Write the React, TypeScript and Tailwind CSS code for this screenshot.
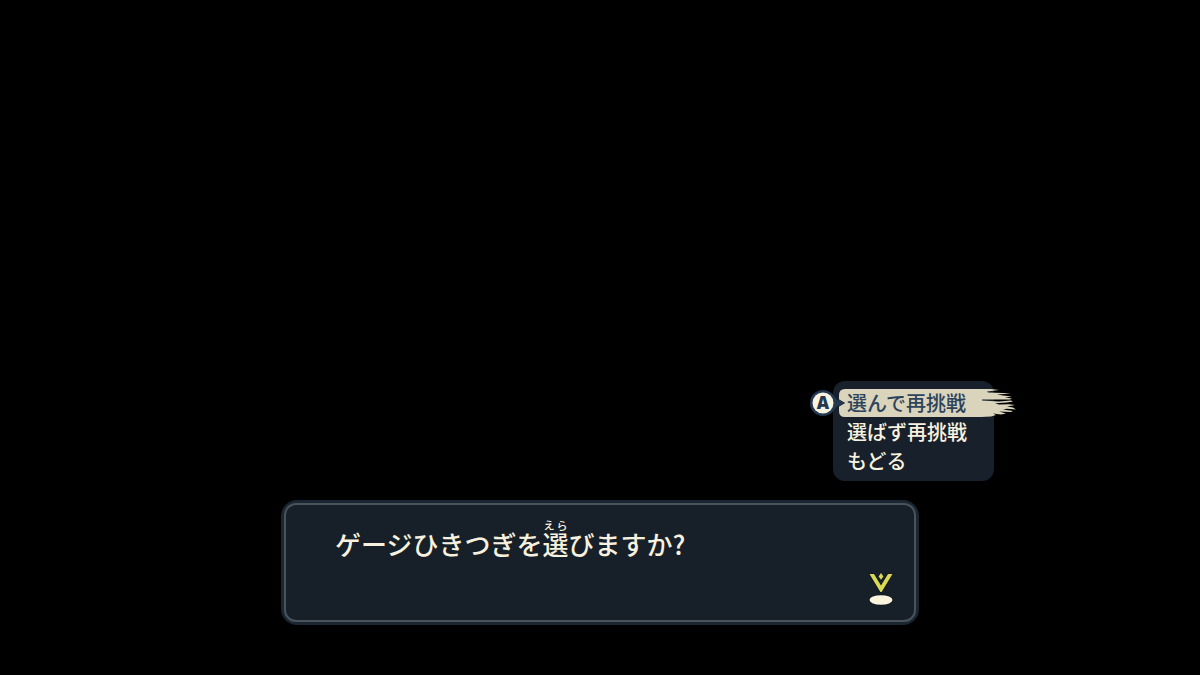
import { useState } from "react";

const OPTIONS = ["選んで再挑戦", "選ばず再挑戦", "もどる"];

function Brush() {
  return (
    <svg
      className="absolute top-0 left-0 h-7 w-[178px]"
      viewBox="0 0 178 28"
      aria-hidden="true"
    >
      <path
        fill="#d9d4bb"
        d="M6 0H152L160 1L148 2.6L149 3.6L164 4L172 4.6L158 5.4L164 6.4L173 7.4L166 8.6L173 9.6L171 10.6L143 10.6V11.6L160 12.4L172 11.4L174 12.4L168 13.4L156 14.2L160 15.6L170 15.2L176 16L168 17.4L174 18.6L177 20.4L168 19.8L164 20.4L174 22L172 23L160 22.6L167 24.6L162 25.4L154 24.6L157 26L152 27.4L142 28H6Q0 28 0 22V17.5L6 14L0 10.5V6Q0 0 6 0Z"
      />
      <path fill="#243850" d="M0 10.5L6 14L0 17.5Z" />
    </svg>
  );
}

function ButtonBadge() {
  return (
    <svg
      className="absolute top-0 -left-[30px] h-7 w-[38px]"
      viewBox="0 0 38 28"
      aria-hidden="true"
    >
      <path fill="#243850" d="M24 6Q28 12 35 14Q28 16 24 22Z" />
      <circle cx="14" cy="14" r="13" fill="#243850" />
      <circle cx="14" cy="14" r="10.5" fill="#f7f3e0" />
      <text
        x="14"
        y="20"
        textAnchor="middle"
        fontSize="17"
        fontWeight="800"
        fill="#243850"
        className="font-['Open_Sans',sans-serif]"
      >
        A
      </text>
    </svg>
  );
}

function NextMarker() {
  return (
    <svg className="block h-9 w-7" viewBox="0 0 28 36" aria-hidden="true">
      <path
        d="M2.5 4H7L14 15.5L21 4H25.5L14.6 22H13.4Z"
        fill="#d9d955"
        stroke="#10161c"
        strokeWidth="1.5"
        paintOrder="stroke"
      />
      <path d="M14 3L16.4 6.4L14 9.8L11.6 6.4Z" fill="#d9d955" />
      <ellipse
        cx="14"
        cy="30"
        rx="11.5"
        ry="4.8"
        fill="#fbf5df"
        stroke="#10161c"
        strokeWidth="1.5"
        paintOrder="stroke"
      />
    </svg>
  );
}

export default function App() {
  const [selected, setSelected] = useState(0);

  return (
    <main
      lang="ja"
      className="flex min-h-screen flex-col justify-end gap-[19px] overflow-hidden bg-black pb-[50px] font-['Noto_Sans_CJK_JP',sans-serif] text-[#f7f2df]"
    >
      <ul className="mr-[206px] flex w-[161px] flex-col gap-px self-end rounded-xl bg-[#17202b] pt-2 pb-1.5 pl-1.5">
        {OPTIONS.map((label, index) => (
          <li key={label} className="relative">
            {index === selected && (
              <>
                <Brush />
                <ButtonBadge />
              </>
            )}
            <button
              type="button"
              onClick={() => setSelected(index)}
              className={`relative block h-7 w-full pl-2 text-left text-xl leading-7 font-medium whitespace-nowrap outline-none ${
                index === selected ? "text-[#2d435c]" : "text-[#f7f2df]"
              }`}
            >
              {label}
            </button>
          </li>
        ))}
      </ul>

      <section className="mx-auto w-full max-w-[638px] rounded-2xl bg-[#1a2632] p-[3px]">
        <div className="flex min-h-[119px] flex-col justify-between rounded-xl border-2 border-[#49535a] bg-[#171f28] pt-[15px] pr-[19px] pb-3.5 pl-[49px]">
          <p className="text-[26px] leading-[48px] font-medium">
            ゲージひきつぎを
            <ruby>
              選<rt className="text-[11px] leading-3 font-medium">えら</rt>
            </ruby>
            びますか?
          </p>
          <button type="button" aria-label="次へ" className="self-end">
            <NextMarker />
          </button>
        </div>
      </section>
    </main>
  );
}
